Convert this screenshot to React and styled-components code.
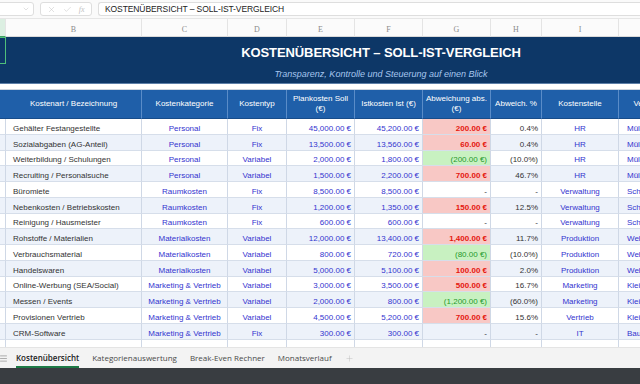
import styled, { createGlobalStyle } from "styled-components"
import { X, Check, ChevronDown, Menu, Plus } from "lucide-react"

const COLS = "6px 136px 86px 59px 68px 68px 68px 51px 77px 80px 57px"
const ROW_H = 15.77

const GlobalStyle = createGlobalStyle`
  html, body {
    margin: 0;
    padding: 0;
    background: #fff;
  }
  body {
    font-family: "Liberation Sans", Arial, sans-serif;
  }
  * {
    box-sizing: border-box;
  }
`

const Frame = styled.div`
  width: 640px;
  height: 384px;
  display: flex;
  flex-direction: column;
  overflow: hidden;
  background: #fff;
`

const FormulaBar = styled.div`
  height: 19px;
  flex-shrink: 0;
  display: flex;
  align-items: center;
  gap: 6px;
  background: #fafafa;
  border-bottom: 1px solid #e6e6e6;
`

const Box = styled.div`
  height: 14px;
  display: flex;
  align-items: center;
  background: #fff;
  border: 1px solid #dedede;
  border-radius: 3px;
  color: #c2c2c2;
`

const NameBox = styled(Box)`
  width: 44px;
  margin-left: -10px;
  justify-content: flex-end;
  padding-right: 3px;
`

const FxBox = styled(Box)`
  width: 52px;
  justify-content: space-around;
  padding: 0 3px;
`

const FxText = styled.span`
  font-family: "Liberation Serif", serif;
  font-style: italic;
  font-size: 8px;
  color: #c2c2c2;
`

const FormulaInput = styled(Box)`
  flex: 1;
  border-right: none;
  border-radius: 3px 0 0 3px;
  padding-left: 6px;
  color: #222;
  font-size: 8.5px;
  letter-spacing: -0.1px;
`

const Sheet = styled.div`
  flex: 1;
  overflow: hidden;
  background: #fff;
`

const GridRow = styled.div`
  display: grid;
  grid-template-columns: ${COLS};
  width: 756px;
  height: ${(p) => p.$h}px;
  background: ${(p) => p.$bg || "transparent"};
`

const ColLetter = styled.div`
  display: flex;
  align-items: center;
  justify-content: center;
  padding-top: 4px;
  font-family: "Liberation Serif", serif;
  font-size: 8px;
  color: #8c8c8c;
  background: ${(p) => (p.$active ? "#dcefe2" : "#fbfbfb")};
  border-right: 1px solid #e4e4e4;
  border-bottom: 1px solid ${(p) => (p.$active ? "#3f9e62" : "#dadada")};
`

const SelectedCell = styled.div`
  border: 1px solid #4fbf7a;
  border-left: none;
`

const TitleCell = styled.div`
  grid-column: 2 / -1;
  display: flex;
  align-items: ${(p) => (p.$sub ? "flex-start" : "flex-end")};
  justify-content: center;
  color: ${(p) => (p.$sub ? "#a6c6ee" : "#fff")};
  font-size: ${(p) => (p.$sub ? "9px" : "13px")};
  font-weight: ${(p) => (p.$sub ? 400 : 700)};
  font-style: ${(p) => (p.$sub ? "italic" : "normal")};
  padding-top: ${(p) => (p.$sub ? "5px" : "0")};
  padding-bottom: ${(p) => (p.$sub ? "0" : "4px")};
  letter-spacing: ${(p) => (p.$sub ? "0" : "-0.1px")};
`

const Spacer = styled.div`
  grid-column: 1 / -1;
  border-top: 1px solid #5c7fa8;
  border-bottom: 1px solid #cfd6df;
`

const HeaderCell = styled.div`
  display: flex;
  align-items: center;
  justify-content: center;
  text-align: center;
  padding: 0 3px;
  color: #fff;
  font-size: 8px;
  line-height: 10.5px;
  background: #1f5fa9;
  border-right: 1px solid #5a8cc8;
  border-bottom: 1px solid #174c8a;
`

const Cell = styled.div`
  display: flex;
  align-items: flex-end;
  justify-content: ${(p) =>
    p.$align === "right" ? "flex-end" : p.$align === "center" ? "center" : "flex-start"};
  padding: 0 ${(p) => (p.$align === "right" ? "3px" : "0")} 1px
    ${(p) => (p.$align === "left" ? `${p.$indent || 7}px` : "0")};
  font-size: 8px;
  white-space: nowrap;
  overflow: hidden;
  color: ${(p) =>
    p.$flag === "bad" ? "#e5170e" : p.$flag === "good" ? "#1e9a2c" : p.$blue ? "#3434cf" : "#333"};
  font-weight: ${(p) => (p.$flag === "bad" ? 700 : 400)};
  background: ${(p) =>
    p.$flag === "bad" ? "#f8c8c5" : p.$flag === "good" ? "#c8f1c1" : "transparent"};
  border-right: 1px solid #cfd8e6;
  border-bottom: 1px solid #d6deea;
`

const TabBar = styled.div`
  height: 21px;
  flex-shrink: 0;
  display: flex;
  align-items: stretch;
  gap: 13px;
  background: #f3f3f3;
  border-top: 1px solid #e4e4e4;
  font-family: "Open Sans", "Noto Sans", sans-serif;
  font-size: 8px;
  color: #4a4a4a;
`

const TabIcon = styled.div`
  display: flex;
  align-items: center;
  color: #777;
  margin-left: ${(p) => (p.$lead ? "-1px" : "0")};
  margin-right: ${(p) => (p.$lead ? "-5px" : "0")};
`

const Tab = styled.div`
  display: flex;
  align-items: center;
  padding-top: 1px;
  font-weight: ${(p) => (p.$active ? 600 : 400)};
  color: ${(p) => (p.$active ? "#222" : "#4a4a4a")};
  border-bottom: 2px solid ${(p) => (p.$active ? "#1e7a46" : "transparent")};
`

const StatusBar = styled.div`
  height: 16px;
  flex-shrink: 0;
  background: #393d41;
`

const letters = ["", "B", "C", "D", "E", "F", "G", "H", "I", "J", "K"]

const headers = [
  "Kostenart / Bezeichnung",
  "Kostenkategorie",
  "Kostentyp",
  "Plankosten Soll (€)",
  "Istkosten Ist (€)",
  "Abweichung abs. (€)",
  "Abweich. %",
  "Kostenstelle",
  "Verantwortlich",
  "Status",
]

const rows = [
  ["Gehälter Festangestellte", "Personal", "Fix", "45,000.00 €", "45,200.00 €", "200.00 €", "0.4%", "HR", "Müller"],
  ["Sozialabgaben (AG-Anteil)", "Personal", "Fix", "13,500.00 €", "13,560.00 €", "60.00 €", "0.4%", "HR", "Müller"],
  ["Weiterbildung / Schulungen", "Personal", "Variabel", "2,000.00 €", "1,800.00 €", "(200.00 €)", "(10.0%)", "HR", "Müller"],
  ["Recruiting / Personalsuche", "Personal", "Variabel", "1,500.00 €", "2,200.00 €", "700.00 €", "46.7%", "HR", "Müller"],
  ["Büromiete", "Raumkosten", "Fix", "8,500.00 €", "8,500.00 €", "-", "-", "Verwaltung", "Schmidt"],
  ["Nebenkosten / Betriebskosten", "Raumkosten", "Fix", "1,200.00 €", "1,350.00 €", "150.00 €", "12.5%", "Verwaltung", "Schmidt"],
  ["Reinigung / Hausmeister", "Raumkosten", "Fix", "600.00 €", "600.00 €", "-", "-", "Verwaltung", "Schmidt"],
  ["Rohstoffe / Materialien", "Materialkosten", "Variabel", "12,000.00 €", "13,400.00 €", "1,400.00 €", "11.7%", "Produktion", "Weber"],
  ["Verbrauchsmaterial", "Materialkosten", "Variabel", "800.00 €", "720.00 €", "(80.00 €)", "(10.0%)", "Produktion", "Weber"],
  ["Handelswaren", "Materialkosten", "Variabel", "5,000.00 €", "5,100.00 €", "100.00 €", "2.0%", "Produktion", "Weber"],
  ["Online-Werbung (SEA/Social)", "Marketing & Vertrieb", "Variabel", "3,000.00 €", "3,500.00 €", "500.00 €", "16.7%", "Marketing", "Klein"],
  ["Messen / Events", "Marketing & Vertrieb", "Variabel", "2,000.00 €", "800.00 €", "(1,200.00 €)", "(60.0%)", "Marketing", "Klein"],
  ["Provisionen Vertrieb", "Marketing & Vertrieb", "Variabel", "4,500.00 €", "5,200.00 €", "700.00 €", "15.6%", "Vertrieb", "Klein"],
  ["CRM-Software", "Marketing & Vertrieb", "Fix", "300.00 €", "300.00 €", "-", "-", "IT", "Bauer"],
]

function flagOf(value) {
  if (value === "-") return null
  return value.startsWith("(") ? "good" : "bad"
}

export default function App() {
  return (
    <Frame>
      <GlobalStyle />
      <FormulaBar>
        <NameBox>
          <ChevronDown size={8} strokeWidth={1.5} />
        </NameBox>
        <FxBox>
          <X size={9} strokeWidth={1.3} />
          <Check size={9} strokeWidth={1.3} />
          <FxText>fx</FxText>
        </FxBox>
        <FormulaInput>KOSTENÜBERSICHT – SOLL-IST-VERGLEICH</FormulaInput>
      </FormulaBar>

      <Sheet>
        <GridRow $h={18}>
          {letters.map((l, i) => (
            <ColLetter key={i} $active={i === 0}>
              {l}
            </ColLetter>
          ))}
        </GridRow>

        <GridRow $h={27} $bg="#0d3767">
          <SelectedCell />
          <TitleCell>KOSTENÜBERSICHT – SOLL-IST-VERGLEICH</TitleCell>
        </GridRow>
        <GridRow $h={19} $bg="#0d3767">
          <div />
          <TitleCell $sub>Transparenz, Kontrolle und Steuerung auf einen Blick</TitleCell>
        </GridRow>
        <GridRow $h={7} $bg="#fff">
          <Spacer />
        </GridRow>

        <GridRow $h={29}>
          <HeaderCell />
          {headers.map((h) => (
            <HeaderCell key={h}>{h}</HeaderCell>
          ))}
        </GridRow>

        {rows.map((r, i) => (
          <GridRow key={r[0]} $h={ROW_H} $bg={i % 2 ? "#edf2fa" : "#fff"}>
            <Cell />
            <Cell $align="left">{r[0]}</Cell>
            <Cell $align="center" $blue>{r[1]}</Cell>
            <Cell $align="center" $blue>{r[2]}</Cell>
            <Cell $align="right" $blue>{r[3]}</Cell>
            <Cell $align="right" $blue>{r[4]}</Cell>
            <Cell $align="right" $flag={flagOf(r[5])}>{r[5]}</Cell>
            <Cell $align="right">{r[6]}</Cell>
            <Cell $align="center" $blue>{r[7]}</Cell>
            <Cell $align="left" $indent={8} $blue>{r[8]}</Cell>
            <Cell />
          </GridRow>
        ))}

        <GridRow $h={ROW_H} $bg="#fff">
          {letters.map((l, i) => (
            <Cell key={i} />
          ))}
        </GridRow>
      </Sheet>

      <TabBar>
        <TabIcon $lead>
          <Menu size={9} strokeWidth={1.5} />
        </TabIcon>
        <Tab $active>Kostenübersicht</Tab>
        <Tab>Kategorienauswertung</Tab>
        <Tab>Break-Even Rechner</Tab>
        <Tab>Monatsverlauf</Tab>
        <TabIcon>
          <Plus size={9} strokeWidth={1.2} color="#bbb" />
        </TabIcon>
      </TabBar>
      <StatusBar />
    </Frame>
  )
}
